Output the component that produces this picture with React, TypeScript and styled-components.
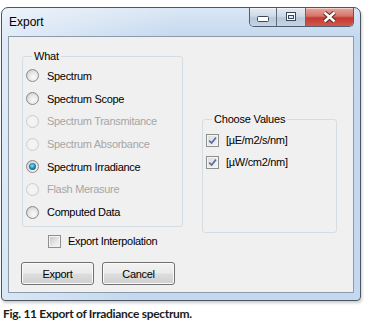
import React from "react";
import styled, { createGlobalStyle } from "styled-components";

const GlobalStyle = createGlobalStyle`
  html, body {
    margin: 0;
    padding: 0;
    background: #ffffff;
  }
  body {
    font-family: "Liberation Sans", Arial, sans-serif;
    font-size: 11px;
  }
`;

const Page = styled.div`
  width: 369px;
  height: 324px;
  box-sizing: border-box;
  padding: 7px 0 0 1px;
  overflow: hidden;
`;

const Window = styled.div`
  width: 360px;
  height: 294px;
  box-sizing: border-box;
  display: flex;
  flex-direction: column;
  padding: 0 6px 7px 6px;
  border: 1px solid #4a5664;
  border-radius: 7px 7px 4px 4px;
  background: linear-gradient(100deg, rgba(255, 255, 255, 0.5) 0%, rgba(255, 255, 255, 0) 45%),
    linear-gradient(#dae7f5 0%, #c3d8ee 30px, #c4d9ef 100%);
  box-shadow: 1px 2px 3px rgba(0, 0, 0, 0.2);
`;

const TitleBar = styled.div`
  height: 28px;
  display: flex;
  justify-content: space-between;
  align-items: flex-start;
`;

const Title = styled.div`
  margin: 7px 0 0 1px;
  font-size: 12px;
  line-height: 15px;
  color: #000;
`;

const Controls = styled.div`
  display: flex;
  height: 18px;
  border: 1px solid #4f5e70;
  border-top: none;
  border-radius: 0 0 5px 5px;
  overflow: hidden;
`;

const CtrlBtn = styled.div<{ $w: number; $close?: boolean }>`
  width: ${(p) => p.$w}px;
  height: 18px;
  display: flex;
  align-items: center;
  justify-content: center;
  box-shadow: inset 0 1px 0 rgba(255, 255, 255, 0.5);
  background: ${(p) =>
    p.$close
      ? "linear-gradient(#e6a69b 0%, #d5746a 45%, #c43a2e 55%, #d0594c 100%)"
      : "linear-gradient(#e3eaf3 0%, #cfdae7 45%, #b8c7d9 55%, #c6d5e6 100%)"};
  & + & {
    border-left: 1px solid #5b6a7c;
  }
`;

const Client = styled.div`
  flex: 1;
  display: flex;
  flex-direction: column;
  border: 1px solid #8c9aaa;
  background: #f0f0f0;
  padding-top: 13px;
`;

const TopRow = styled.div`
  display: flex;
  align-items: flex-start;
  padding-left: 13px;
`;

const Group = styled.fieldset<{ $w: number; $h: number; $top?: number; $left?: number }>`
  margin: ${(p) => p.$top || 0}px 0 0 ${(p) => p.$left || 0}px;
  width: ${(p) => p.$w}px;
  height: ${(p) => p.$h}px;
  box-sizing: border-box;
  min-inline-size: 0;
  border: 1px solid #d5dde3;
  border-radius: 3px;
  padding: 0 0 0 3px;
`;

const Legend = styled.legend`
  margin-left: 6px;
  padding: 0 2px;
  font-size: 11px;
  line-height: 13px;
  letter-spacing: -0.2px;
  color: #000;
`;

const OptionList = styled.div<{ $row: number; $pad: number }>`
  display: grid;
  grid-auto-rows: ${(p) => p.$row}px;
  padding-top: ${(p) => p.$pad}px;
`;

const Option = styled.label<{ $disabled?: boolean; $gap: number }>`
  display: flex;
  align-items: center;
  gap: ${(p) => p.$gap}px;
  font-size: 11px;
  letter-spacing: -0.3px;
  color: ${(p) => (p.$disabled ? "#a6a6a6" : "#000")};
  white-space: nowrap;
`;

const Radio = styled.span<{ $checked?: boolean; $disabled?: boolean }>`
  width: 13px;
  height: 13px;
  box-sizing: border-box;
  flex-shrink: 0;
  border-radius: 50%;
  display: flex;
  align-items: center;
  justify-content: center;
  border: 1px solid ${(p) => (p.$disabled ? "#cdcdcd" : "#8a8a8a")};
  background: ${(p) =>
    p.$disabled
      ? "radial-gradient(circle at 50% 50%, #f6f6f6 0%, #eeeeee 100%)"
      : "radial-gradient(circle at 60% 65%, #fbfbfb 0%, #e8e8e8 45%, #c2c2c2 100%)"};
  &::after {
    content: "";
    display: ${(p) => (p.$checked ? "block" : "none")};
    width: 7px;
    height: 7px;
    border-radius: 50%;
    background: radial-gradient(circle at 45% 40%, #8be4ff 0%, #1f8dba 45%, #0c3d58 100%);
  }
`;

const Check = styled.span<{ $checked?: boolean }>`
  width: 13px;
  height: 13px;
  box-sizing: border-box;
  flex-shrink: 0;
  display: flex;
  align-items: center;
  justify-content: center;
  border: 1px solid #8e8f8f;
  box-shadow: inset 0 0 0 1px #f4f4f4;
  background: ${(p) =>
    p.$checked
      ? "linear-gradient(135deg, #dcdcdc 0%, #f4f4f4 100%)"
      : "linear-gradient(135deg, #c4c4c4 0%, #e8e8e8 60%, #f6f6f6 100%)"};
`;

const CheckRow = styled.div`
  height: 16px;
  padding-left: 39px;
  display: flex;
`;

const ButtonRow = styled.div`
  display: flex;
  gap: 8px;
  margin-top: 13px;
  padding-left: 12px;
`;

const Button = styled.button`
  width: 73px;
  height: 23px;
  box-sizing: border-box;
  padding: 0;
  border: 1px solid #707070;
  border-radius: 3px;
  font-family: "Liberation Sans", Arial, sans-serif;
  font-size: 11px;
  letter-spacing: -0.3px;
  color: #000;
  box-shadow: inset 0 0 0 1px #fbfbfb;
  background: linear-gradient(#f2f2f2 0%, #ebebeb 48%, #dddddd 52%, #cfcfcf 100%);
`;

const Caption = styled.div`
  margin: 6px 0 0 2px;
  font-family: Lato, "Liberation Sans", Arial, sans-serif;
  font-weight: bold;
  font-size: 12px;
  line-height: 14px;
  letter-spacing: -0.3px;
  color: #1c1c1c;
`;

const MinIcon = () => (
  <svg width="12" height="6" viewBox="0 0 12 6" style={{ marginTop: 3 }}>
    <rect x="0.5" y="0.5" width="11" height="5" rx="1" fill="#fff" stroke="#38475a" />
  </svg>
);

const MaxIcon = () => (
  <svg width="10" height="9" viewBox="0 0 10 9" style={{ marginTop: -2 }}>
    <rect x="0.5" y="0.5" width="9" height="8" fill="#fff" stroke="#38475a" />
    <rect x="2.5" y="3.5" width="5" height="3" fill="#dfe7f0" stroke="#38475a" />
  </svg>
);

const CloseIcon = () => (
  <svg width="15" height="12" viewBox="0 0 15 12">
    <path d="M2.5 1.5 L12.5 10.5 M12.5 1.5 L2.5 10.5" stroke="#5a2a24" strokeWidth="4.4" />
    <path d="M2.5 1.5 L12.5 10.5 M12.5 1.5 L2.5 10.5" stroke="#fff" strokeWidth="2.4" />
  </svg>
);

const Tick = () => (
  <svg width="9" height="9" viewBox="0 0 9 9">
    <path d="M1.2 4.6 L3.6 7 L7.9 1.6" fill="none" stroke="#5a6ea3" strokeWidth="1.7" />
  </svg>
);

const whatItems = [
  { label: "Spectrum" },
  { label: "Spectrum Scope" },
  { label: "Spectrum Transmitance", disabled: true },
  { label: "Spectrum Absorbance", disabled: true },
  { label: "Spectrum Irradiance", checked: true },
  { label: "Flash Merasure", disabled: true },
  { label: "Computed Data" },
];

const values = ["[µE/m2/s/nm]", "[µW/cm2/nm]"];

function App() {
  return (
    <Page>
      <GlobalStyle />
      <Window>
        <TitleBar>
          <Title>Export</Title>
          <Controls>
            <CtrlBtn $w={26}>
              <MinIcon />
            </CtrlBtn>
            <CtrlBtn $w={28}>
              <MaxIcon />
            </CtrlBtn>
            <CtrlBtn $w={47} $close>
              <CloseIcon />
            </CtrlBtn>
          </Controls>
        </TitleBar>
        <Client>
          <TopRow>
            <Group $w={161} $h={177}>
              <Legend>What</Legend>
              <OptionList $row={22.7} $pad={1.6}>
                {whatItems.map((it) => (
                  <Option key={it.label} $disabled={it.disabled} $gap={8}>
                    <Radio $checked={it.checked} $disabled={it.disabled} />
                    {it.label}
                  </Option>
                ))}
              </OptionList>
            </Group>
            <Group $w={135} $h={120} $top={63} $left={19}>
              <Legend>Choose Values</Legend>
              <OptionList $row={22} $pad={3}>
                {values.map((v) => (
                  <Option key={v} $gap={7}>
                    <Check $checked>
                      <Tick />
                    </Check>
                    {v}
                  </Option>
                ))}
              </OptionList>
            </Group>
          </TopRow>
          <CheckRow>
            <Option $gap={7}>
              <Check />
              Export Interpolation
            </Option>
          </CheckRow>
          <ButtonRow>
            <Button>Export</Button>
            <Button>Cancel</Button>
          </ButtonRow>
        </Client>
      </Window>
      <Caption>Fig. 11 Export of Irradiance spectrum.</Caption>
    </Page>
  );
}

export default App;
